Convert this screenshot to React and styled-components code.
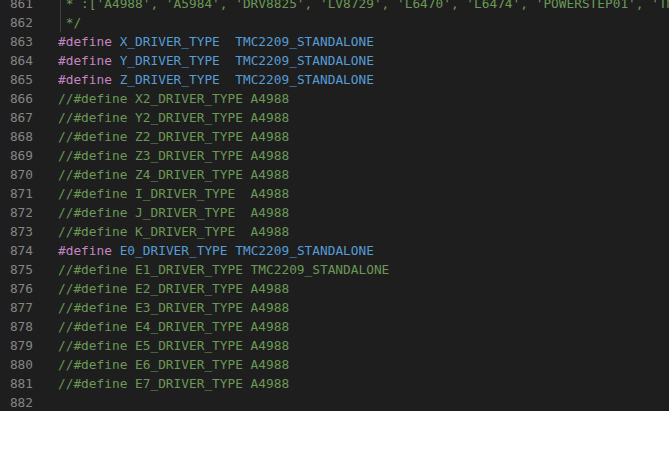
import styled, { createGlobalStyle } from "styled-components";

const GlobalStyle = createGlobalStyle`
  html, body {
    margin: 0;
    padding: 0;
    background: #ffffff;
  }
`

const Editor = styled.div`
  width: 669px;
  height: 411px;
  overflow: hidden;
  background-color: #1e1e1e;
  font-family: "DejaVu Sans Mono", "Liberation Mono", monospace;
  font-size: 12.8px;
`

const Lines = styled.div`
  margin-top: -6px;
  display: flex;
  flex-direction: column;
`

const Row = styled.div`
  display: flex;
  height: 19px;
  line-height: 19px;
  white-space: pre;
`

const LineNo = styled.span`
  width: 33px;
  flex-shrink: 0;
  text-align: right;
  color: #858585;
  margin-right: 25px;
`

const Code = styled.span`
  position: relative;
  color: #d4d4d4;
`

const Guide = styled.span`
  position: absolute;
  left: 2px;
  top: 0;
  bottom: 0;
  border-left: 1px solid #404040;
`

const Tok = styled.span`
  color: ${p => ({
    comment: '#6a9955',
    keyword: '#c586c0',
    macro: '#569cd6',
    value: '#569cd6',
  })[p.$kind]};
`

const comment = (text) => [['comment', text]]

const rows = [
  [861, comment(" * :['A4988', 'A5984', 'DRV8825', 'LV8729', 'L6470', 'L6474', 'POWERSTEP01', 'TMC2100', 'TMC2130'"), true],
  [862, comment(' */'), true],
  [863, [['keyword', '#define'], ['plain', ' '], ['macro', 'X_DRIVER_TYPE'], ['plain', '  '], ['value', 'TMC2209_STANDALONE']]],
  [864, [['keyword', '#define'], ['plain', ' '], ['macro', 'Y_DRIVER_TYPE'], ['plain', '  '], ['value', 'TMC2209_STANDALONE']]],
  [865, [['keyword', '#define'], ['plain', ' '], ['macro', 'Z_DRIVER_TYPE'], ['plain', '  '], ['value', 'TMC2209_STANDALONE']]],
  [866, comment('//#define X2_DRIVER_TYPE A4988')],
  [867, comment('//#define Y2_DRIVER_TYPE A4988')],
  [868, comment('//#define Z2_DRIVER_TYPE A4988')],
  [869, comment('//#define Z3_DRIVER_TYPE A4988')],
  [870, comment('//#define Z4_DRIVER_TYPE A4988')],
  [871, comment('//#define I_DRIVER_TYPE  A4988')],
  [872, comment('//#define J_DRIVER_TYPE  A4988')],
  [873, comment('//#define K_DRIVER_TYPE  A4988')],
  [874, [['keyword', '#define'], ['plain', ' '], ['macro', 'E0_DRIVER_TYPE'], ['plain', ' '], ['value', 'TMC2209_STANDALONE']]],
  [875, comment('//#define E1_DRIVER_TYPE TMC2209_STANDALONE')],
  [876, comment('//#define E2_DRIVER_TYPE A4988')],
  [877, comment('//#define E3_DRIVER_TYPE A4988')],
  [878, comment('//#define E4_DRIVER_TYPE A4988')],
  [879, comment('//#define E5_DRIVER_TYPE A4988')],
  [880, comment('//#define E6_DRIVER_TYPE A4988')],
  [881, comment('//#define E7_DRIVER_TYPE A4988')],
  [882, []],
]

export default function App() {
  return (
    <>
      <GlobalStyle />
      <Editor>
        <Lines>
          {rows.map(([num, tokens, guide]) => (
            <Row key={num}>
              <LineNo>{num}</LineNo>
              <Code>
                {guide && <Guide />}
                {tokens.map(([kind, text], i) =>
                  kind === 'plain'
                    ? <span key={i}>{text}</span>
                    : <Tok key={i} $kind={kind}>{text}</Tok>
                )}
              </Code>
            </Row>
          ))}
        </Lines>
      </Editor>
    </>
  )
}
